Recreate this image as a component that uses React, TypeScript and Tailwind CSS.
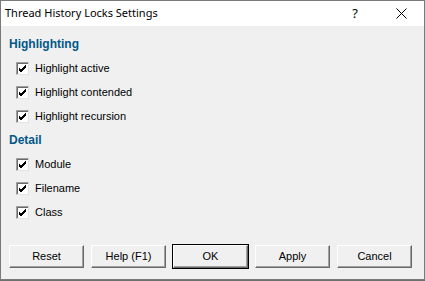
import React from "react";

const sections = [
  { title: "Highlighting", items: ["Highlight active", "Highlight contended", "Highlight recursion"] },
  { title: "Detail", items: ["Module", "Filename", "Class"] },
];

const buttons = ["Reset", "Help (F1)", "OK", "Apply", "Cancel"];

const CheckBox = () => (
  <span className="w-[13px] h-[13px] bg-white border border-t-[#a0a0a0] border-l-[#a0a0a0] border-r-[#e3e3e3] border-b-[#e3e3e3] shadow-[inset_1px_1px_0_#696969] flex items-center justify-center">
    <svg width="9" height="9" viewBox="0 0 9 9">
      <path d="M1 4 L3 6 L8 1 M1 5 L3 7 L8 2 M1 6 L3 8 L8 3" stroke="#000" strokeWidth="1" fill="none" />
    </svg>
  </span>
);

const Button = ({ label }: { label: string }) => (
  <button
    className={
      "w-[75px] h-[23px] bg-[#f0f0f0] text-[11px] text-black border-t border-l border-t-white border-l-white border-r border-b border-r-[#696969] border-b-[#696969] shadow-[inset_-1px_-1px_0_#a0a0a0] " +
      (label === "OK" ? "outline outline-1 outline-black" : "")
    }
  >
    {label}
  </button>
);

export default function App() {
  return (
    <div className="w-[425px] h-[281px] bg-[#6e6e6e] pb-[1px]" style={{ fontFamily: '"Liberation Sans", Arial, sans-serif' }}>
      <div className="h-[280px] border border-[#7a7a7a] flex flex-col bg-[#f0f0f0]">
        {/* TITLE BAR */}
        <div className="h-[25px] bg-white flex items-center pl-[4px]">
          <span className="text-[11px] text-black flex-1" style={{ fontFamily: '"Noto Sans", sans-serif' }}>
            Thread History Locks Settings
          </span>
          <span className="text-[13px] text-black w-[46px] text-center" style={{ fontFamily: '"Noto Sans", sans-serif' }}>?</span>
          <span className="w-[46px] flex justify-center">
            <svg width="11" height="11" viewBox="0 0 11 11">
              <path d="M0.5 0.5 L10.5 10.5 M10.5 0.5 L0.5 10.5" stroke="#000" strokeWidth="1" />
            </svg>
          </span>
        </div>

        {/* BODY */}
        <div className="flex-1 flex flex-col pt-[6px] pl-[8px]">
          {sections.map((s) => (
            <div key={s.title} className="flex flex-col">
              <div className="h-[24px] flex items-center text-[12px] font-bold text-[#005888]">{s.title}</div>
              {s.items.map((it) => (
                <div key={it} className="h-[24px] flex items-center gap-[6px] pl-[7px]">
                  <CheckBox />
                  <span className="text-[11px] text-black">{it}</span>
                </div>
              ))}
            </div>
          ))}
        </div>

        {/* BUTTONS */}
        <div className="flex gap-[7px] pl-[8px] pb-[11px]">
          {buttons.map((b) => (
            <Button key={b} label={b} />
          ))}
        </div>
      </div>
    </div>
  );
}
